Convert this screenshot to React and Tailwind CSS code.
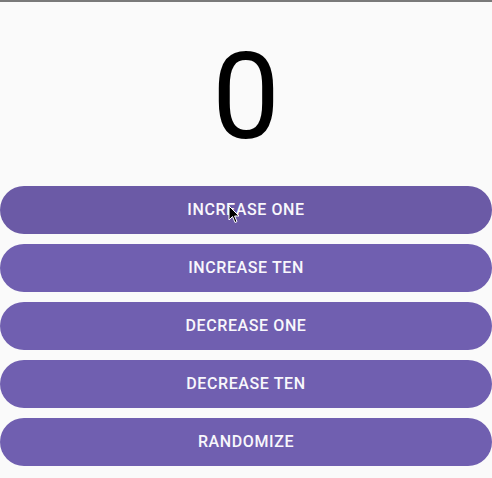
import React from "react";

const labels = ["INCREASE ONE", "INCREASE TEN", "DECREASE ONE", "DECREASE TEN", "RANDOMIZE"];

export default function App() {
  return (
    <div className="relative w-[492px] h-[478px] bg-[#fafafa] border-t-2 border-[#7a7a7a] overflow-hidden" style={{ fontFamily: "Roboto, 'Noto Sans', sans-serif" }}>
      <div className="flex justify-center pt-[35px]">
        <div className="text-[121px] leading-none text-black font-normal h-[121px]">0</div>
      </div>
      <div className="flex flex-col gap-[10px] mt-[28px]">
        {labels.map((l, i) => (
          <button
            key={l}
            className={`${i === 0 ? "bg-[#6b5aa6]" : "bg-[#705fb0]"} h-[48px] w-full rounded-[24px] text-[#f8f7fc] text-[16px] font-medium tracking-[0.6px] flex items-center justify-center`}
          >
            {l}
          </button>
        ))}
      </div>
      <svg className="absolute left-[228px] top-[203px]" width="12" height="19" viewBox="0 0 12 19">
        <path d="M1 1 L1 15 L4.5 11.5 L7 17.5 L9 16.6 L6.6 11 L11 11 Z" fill="#000" stroke="#fff" strokeWidth="1" />
      </svg>
    </div>
  );
}
